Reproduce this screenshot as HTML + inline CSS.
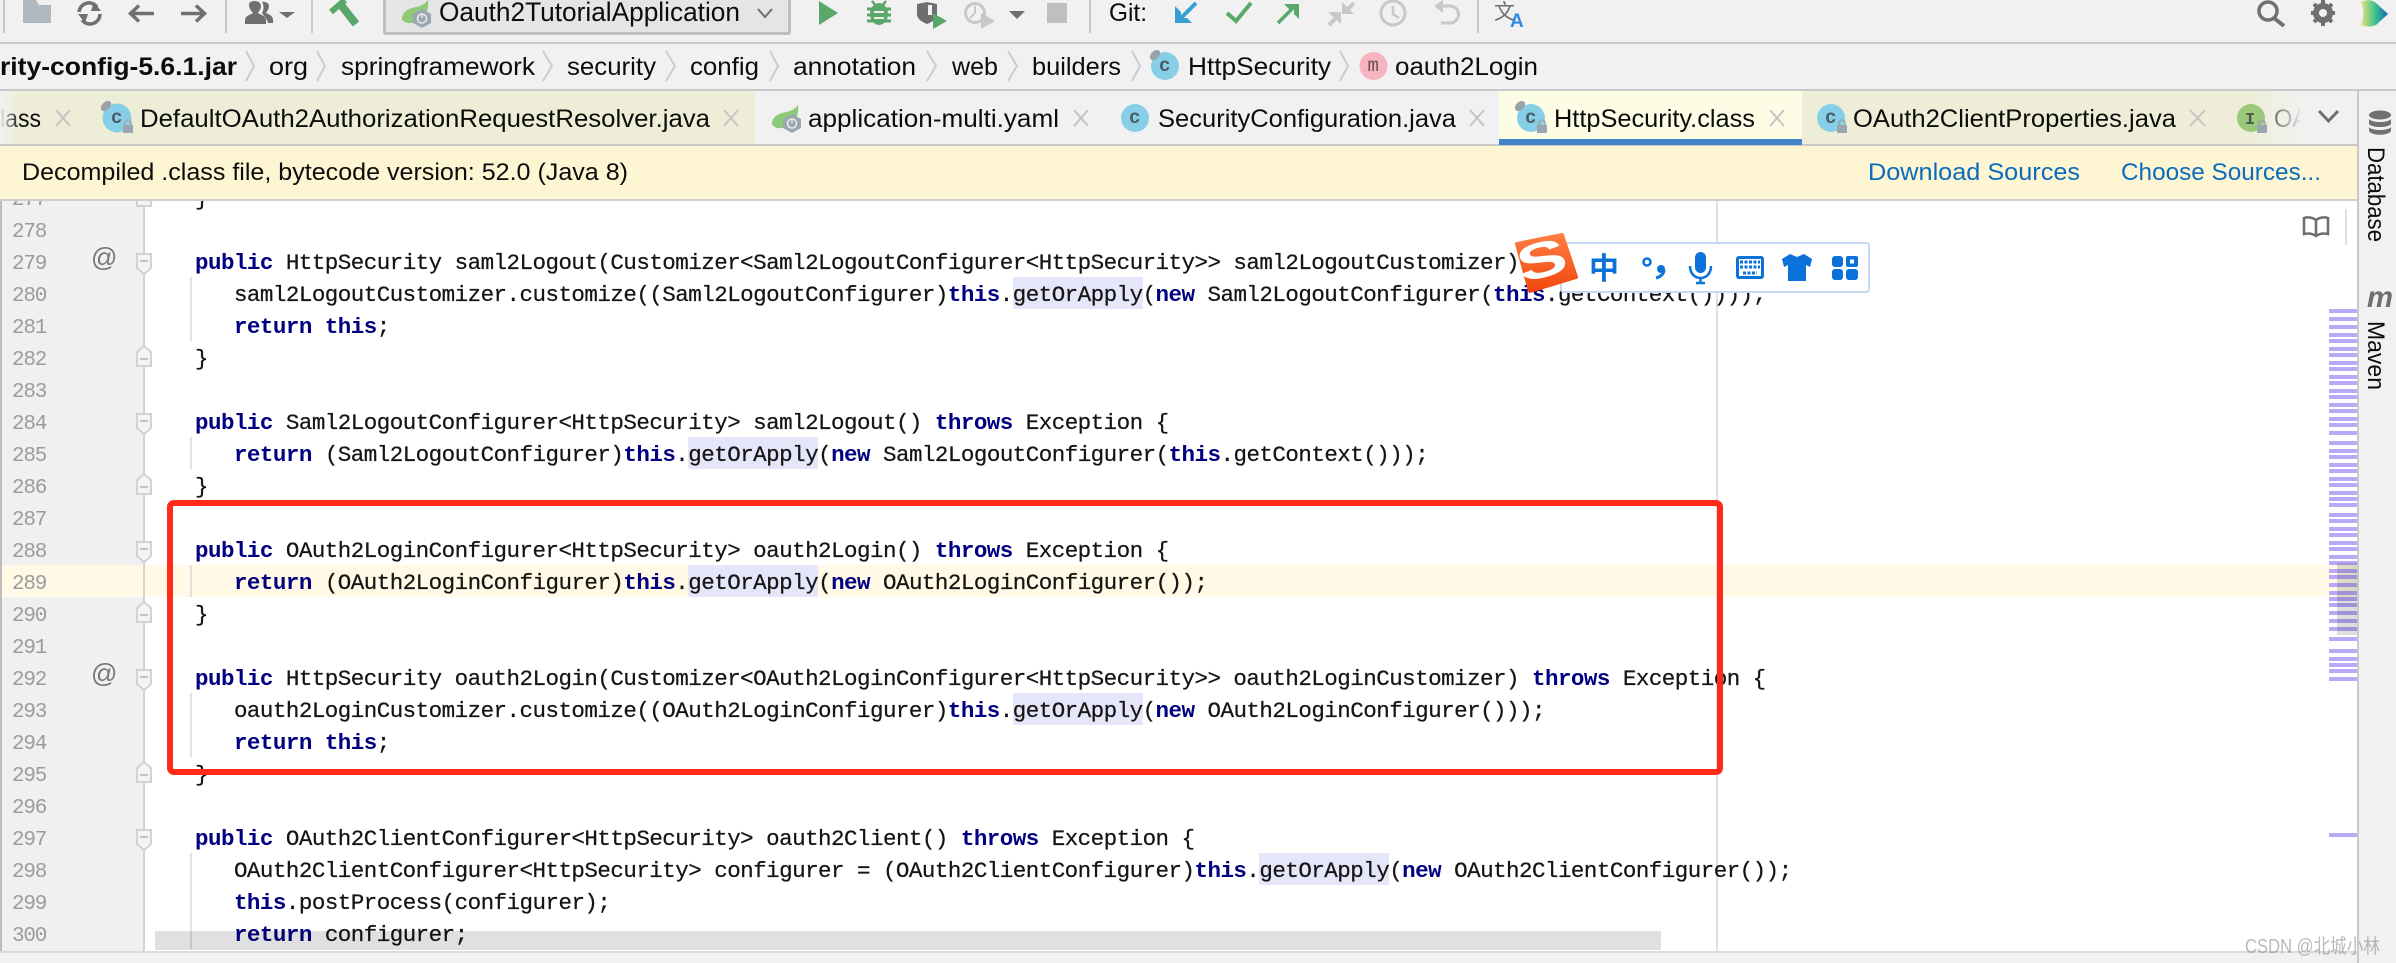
<!DOCTYPE html>
<html><head><meta charset="utf-8"><style>
html,body{margin:0;padding:0;background:#fff;width:2396px;height:963px;overflow:hidden}
svg{display:block}
text{font-family:"Liberation Sans","Noto Sans CJK SC",sans-serif;white-space:pre}
.u{font-size:25px;fill:#0c0c0c}
.l{font-size:24px;fill:#0b6cbd}
.c{font-family:"Liberation Mono",monospace;font-size:22.5px;fill:#151515;letter-spacing:-.522px;stroke:#151515;stroke-width:.25}
.c tspan{font-weight:bold;fill:#000080;stroke:none}
.n{font-family:"Liberation Mono",monospace;font-size:21px;fill:#9c9c9c;letter-spacing:-1.2px}
.ic{font-family:"Liberation Mono",monospace;font-size:19px;fill:#4c5a64;font-weight:bold}
.x{stroke:#c4c4c4;stroke-width:2;fill:none}
.s{stroke:#c9ccd0;stroke-width:2;fill:none}
</style></head><body>
<svg width="2396" height="963" viewBox="0 0 2396 963" xmlns="http://www.w3.org/2000/svg">
<defs>
<linearGradient id="fl" x1="0" x2="1" y1="0" y2="0"><stop offset="0" stop-color="#f1f1f1"/><stop offset="1" stop-color="#f1f1f1" stop-opacity="0"/></linearGradient>
<linearGradient id="fr" x1="0" x2="1" y1="0" y2="0"><stop offset="0" stop-color="#f1f1f1" stop-opacity="0"/><stop offset="1" stop-color="#f1f1f1"/></linearGradient>
<linearGradient id="sg" x1="0" x2="0" y1="0" y2="1"><stop offset="0" stop-color="#ff7d42"/><stop offset="1" stop-color="#f0480e"/></linearGradient>
<linearGradient id="jb" x1="0" x2="1" y1="0" y2="0"><stop offset="0" stop-color="#e9e27a"/><stop offset=".55" stop-color="#35c08c"/><stop offset="1" stop-color="#1565c0"/></linearGradient>
<g id="spring"><path d="M1 19C1 11 9 8 15 7C20 6 24 4 27 0C28 8 26 15 20 19C14 24 4 25 1 19Z" fill="#8fca7b"/><path d="M21 9L30 14V23L21 28L12 23V14Z" fill="#9aa7b0"/><circle cx="21" cy="18.500" r="4.500" fill="none" stroke="#e8e8e8" stroke-width="1.600"/><path d="M21 14V18" stroke="#e8e8e8" stroke-width="1.500"/></g>
<g id="fs"><path d="M-7 0H7V14L0 20L-7 14Z" fill="#f4f4f4" stroke="#d2d2d2" stroke-width="2"/><path d="M-4 7H4" stroke="#c4c4c4" stroke-width="2"/></g>
<g id="fe"><path d="M-7 20H7V6L0 0L-7 6Z" fill="#f4f4f4" stroke="#d2d2d2" stroke-width="2"/><path d="M-4 13H4" stroke="#c4c4c4" stroke-width="2"/></g>
<g id="lock"><path d="M2 5V3A3 3 0 0 1 8 3V5" fill="none" stroke="#9aa7b0" stroke-width="1.600"/><rect x="0" y="5" width="10" height="8" fill="#9aa7b0"/></g>
</defs>

<!-- page base -->
<rect width="2396" height="963" fill="#fff"/>

<!-- editor: current line, gutter -->
<rect x="0" y="199" width="145" height="752" fill="#f0f0f0"/>
<rect x="0" y="199" width="2" height="764" fill="#bdbdbd"/>
<rect x="2" y="565" width="2355" height="32" fill="#fff9e5"/>
<rect x="1716" y="199" width="2" height="752" fill="#e0e0e0"/>
<rect x="143" y="199" width="2" height="752" fill="#d2d2d2"/>

<!-- usage highlights -->
<g fill="#e6e6fa">
<rect x="1013" y="277" width="130" height="32"/>
<rect x="688" y="437" width="130" height="32"/>
<rect x="688" y="565" width="130" height="32"/>
<rect x="1013" y="693" width="130" height="32"/>
<rect x="1259" y="853" width="130" height="32"/>
</g>
<!-- indent guides -->
<g fill="#e2e2e2">
<rect x="190" y="277" width="2" height="64"/>
<rect x="190" y="437" width="2" height="32"/>
<rect x="190" y="565" width="2" height="32"/>
<rect x="190" y="693" width="2" height="64"/>
<rect x="190" y="853" width="2" height="96"/>
</g>

<!-- line numbers -->
<text class="n" x="12" y="205">277</text>
<text class="n" x="12" y="237">278</text>
<text class="n" x="12" y="269">279</text>
<text class="n" x="12" y="301">280</text>
<text class="n" x="12" y="333">281</text>
<text class="n" x="12" y="365">282</text>
<text class="n" x="12" y="397">283</text>
<text class="n" x="12" y="429">284</text>
<text class="n" x="12" y="461">285</text>
<text class="n" x="12" y="493">286</text>
<text class="n" x="12" y="525">287</text>
<text class="n" x="12" y="557">288</text>
<text class="n" x="12" y="589">289</text>
<text class="n" x="12" y="621">290</text>
<text class="n" x="12" y="653">291</text>
<text class="n" x="12" y="685">292</text>
<text class="n" x="12" y="717">293</text>
<text class="n" x="12" y="749">294</text>
<text class="n" x="12" y="781">295</text>
<text class="n" x="12" y="813">296</text>
<text class="n" x="12" y="845">297</text>
<text class="n" x="12" y="877">298</text>
<text class="n" x="12" y="909">299</text>
<text class="n" x="12" y="941">300</text>
<text x="91" y="266" style="font-size:26px;fill:#777">@</text>
<text x="91" y="682" style="font-size:26px;fill:#777">@</text>

<!-- fold marks -->
<use href="#fe" x="144" y="186"/>
<use href="#fs" x="144" y="254"/>
<use href="#fe" x="144" y="346"/>
<use href="#fs" x="144" y="414"/>
<use href="#fe" x="144" y="474"/>
<use href="#fs" x="144" y="542"/>
<use href="#fe" x="144" y="602"/>
<use href="#fs" x="144" y="670"/>
<use href="#fe" x="144" y="762"/>
<use href="#fs" x="144" y="830"/>

<!-- code -->
<text class="c" x="195" y="205">}</text>
<text class="c" x="195" y="269"><tspan>public</tspan> HttpSecurity saml2Logout(Customizer&lt;Saml2LogoutConfigurer&lt;HttpSecurity&gt;&gt; saml2LogoutCustomizer) <tspan>throws</tspan> Exception {</text>
<text class="c" x="195" y="301">   saml2LogoutCustomizer.customize((Saml2LogoutConfigurer)<tspan>this</tspan>.getOrApply(<tspan>new</tspan> Saml2LogoutConfigurer(<tspan>this</tspan>.getContext())));</text>
<text class="c" x="195" y="333">   <tspan>return</tspan> <tspan>this</tspan>;</text>
<text class="c" x="195" y="365">}</text>
<text class="c" x="195" y="429"><tspan>public</tspan> Saml2LogoutConfigurer&lt;HttpSecurity&gt; saml2Logout() <tspan>throws</tspan> Exception {</text>
<text class="c" x="195" y="461">   <tspan>return</tspan> (Saml2LogoutConfigurer)<tspan>this</tspan>.getOrApply(<tspan>new</tspan> Saml2LogoutConfigurer(<tspan>this</tspan>.getContext()));</text>
<text class="c" x="195" y="493">}</text>
<text class="c" x="195" y="557"><tspan>public</tspan> OAuth2LoginConfigurer&lt;HttpSecurity&gt; oauth2Login() <tspan>throws</tspan> Exception {</text>
<text class="c" x="195" y="589">   <tspan>return</tspan> (OAuth2LoginConfigurer)<tspan>this</tspan>.getOrApply(<tspan>new</tspan> OAuth2LoginConfigurer());</text>
<text class="c" x="195" y="621">}</text>
<text class="c" x="195" y="685"><tspan>public</tspan> HttpSecurity oauth2Login(Customizer&lt;OAuth2LoginConfigurer&lt;HttpSecurity&gt;&gt; oauth2LoginCustomizer) <tspan>throws</tspan> Exception {</text>
<text class="c" x="195" y="717">   oauth2LoginCustomizer.customize((OAuth2LoginConfigurer)<tspan>this</tspan>.getOrApply(<tspan>new</tspan> OAuth2LoginConfigurer()));</text>
<text class="c" x="195" y="749">   <tspan>return</tspan> <tspan>this</tspan>;</text>
<text class="c" x="195" y="781">}</text>
<text class="c" x="195" y="845"><tspan>public</tspan> OAuth2ClientConfigurer&lt;HttpSecurity&gt; oauth2Client() <tspan>throws</tspan> Exception {</text>
<text class="c" x="195" y="877">   OAuth2ClientConfigurer&lt;HttpSecurity&gt; configurer = (OAuth2ClientConfigurer)<tspan>this</tspan>.getOrApply(<tspan>new</tspan> OAuth2ClientConfigurer());</text>
<text class="c" x="195" y="909">   <tspan>this</tspan>.postProcess(configurer);</text>
<text class="c" x="195" y="941">   <tspan>return</tspan> configurer;</text>

<!-- h scrollbar & bottom bar -->
<rect x="155" y="931" width="1506" height="19" fill="#000" fill-opacity=".12"/>
<rect x="0" y="951" width="2396" height="12" fill="#f1f1f1"/>
<rect x="0" y="951" width="2357" height="2" fill="#dcdcdc"/>

<!-- error stripes -->
<g fill="#b9a9f8">
<rect x="2329" y="309" width="28" height="4"/><rect x="2329" y="317" width="28" height="4"/><rect x="2329" y="325" width="28" height="4"/><rect x="2329" y="333" width="28" height="4"/><rect x="2329" y="339" width="28" height="4"/><rect x="2329" y="347" width="28" height="4"/><rect x="2329" y="353" width="28" height="4"/><rect x="2329" y="361" width="28" height="4"/><rect x="2329" y="367" width="28" height="4"/><rect x="2329" y="375" width="28" height="4"/><rect x="2329" y="381" width="28" height="4"/><rect x="2329" y="389" width="28" height="4"/><rect x="2329" y="395" width="28" height="4"/><rect x="2329" y="403" width="28" height="4"/><rect x="2329" y="409" width="28" height="4"/><rect x="2329" y="417" width="28" height="4"/><rect x="2329" y="423" width="28" height="4"/><rect x="2329" y="431" width="28" height="4"/><rect x="2329" y="441" width="28" height="4"/><rect x="2329" y="449" width="28" height="4"/><rect x="2329" y="455" width="28" height="4"/><rect x="2329" y="463" width="28" height="4"/><rect x="2329" y="469" width="28" height="4"/><rect x="2329" y="477" width="28" height="4"/><rect x="2329" y="483" width="28" height="4"/><rect x="2329" y="491" width="28" height="4"/><rect x="2329" y="497" width="28" height="4"/><rect x="2329" y="503" width="28" height="4"/><rect x="2329" y="513" width="28" height="4"/><rect x="2329" y="519" width="28" height="4"/><rect x="2329" y="527" width="28" height="4"/><rect x="2329" y="533" width="28" height="4"/><rect x="2329" y="541" width="28" height="4"/><rect x="2329" y="547" width="28" height="4"/><rect x="2329" y="555" width="28" height="4"/><rect x="2329" y="561" width="28" height="4"/><rect x="2329" y="569" width="28" height="4"/><rect x="2329" y="575" width="28" height="4"/><rect x="2329" y="583" width="28" height="4"/><rect x="2329" y="591" width="28" height="4"/><rect x="2329" y="597" width="28" height="4"/><rect x="2329" y="603" width="28" height="4"/><rect x="2329" y="611" width="28" height="4"/><rect x="2329" y="619" width="28" height="4"/><rect x="2329" y="627" width="28" height="4"/><rect x="2329" y="637" width="28" height="4"/><rect x="2329" y="649" width="28" height="4"/><rect x="2329" y="657" width="28" height="4"/><rect x="2329" y="663" width="28" height="4"/><rect x="2329" y="669" width="28" height="4"/><rect x="2329" y="677" width="28" height="4"/><rect x="2329" y="833" width="28" height="4"/>
</g>
<rect x="2337" y="563" width="20" height="72" fill="#000" fill-opacity=".13"/>

<!-- reader icon -->
<path d="M2316 220C2312 217 2307 217 2304 218V234C2308 233 2312 233 2316 236C2320 233 2324 233 2328 234V218C2325 217 2320 217 2316 220ZM2316 220V236" fill="none" stroke="#6e6e6e" stroke-width="2.500"/>
<rect x="2345" y="209" width="2" height="36" fill="#e0e0e0"/>

<!-- red box -->
<rect x="170" y="503" width="1550" height="269" rx="4" fill="none" stroke="#ff2a18" stroke-width="6"/>

<!-- toolbar -->
<rect x="0" y="0" width="2396" height="42" fill="#f1f1f1"/>
<rect x="0" y="42" width="2396" height="2" fill="#c9c9c9"/>
<g fill="#c8c8c8"><rect x="3" y="0" width="2" height="33"/><rect x="225" y="0" width="2" height="33"/><rect x="311" y="0" width="2" height="33"/><rect x="1089" y="0" width="2" height="33"/><rect x="1477" y="0" width="2" height="33"/></g>
<path d="M23 0H36L39 5H51V23H23Z" fill="#afb9bf"/>
<g fill="none" stroke="#707070" stroke-width="3.500">
<path d="M79 12A10 10 0 0 1 97 7"/><path d="M100 14A10 10 0 0 1 82 20"/>
<path d="M154 13.500H131M139 5.500L130.500 13.500L139 21.500"/>
<path d="M181 13.500H204M196 5.500L204.500 13.500L196 21.500"/>
</g>
<path d="M94 2L101 11H91ZM85 23L78 14H88Z" fill="#707070"/>
<path d="M245 24V20C245 16 250 15 253 13C250 10 249 7 249 5C249 2 252 1 255 1C258 1 261 3 261 6C261 9 259 11 258 13C261 15 266 16 266 20V24ZM262 2C265 1 269 3 269 6C269 9 267 11 266 13C269 14 273 16 273 20V23H268C267 18 263 15 262 13C264 10 264 5 262 2Z" fill="#707070"/>
<path d="M279 12H295L287 18Z" fill="#707070"/>
<path d="M341 5L356 24" stroke="#59a869" stroke-width="8"/><path d="M331 12L345 0" stroke="#59a869" stroke-width="6"/>
<rect x="384.500" y="-3" width="405" height="36.500" rx="1" fill="#e5e5e5" stroke="#bfbfbf" stroke-width="3"/>
<use href="#spring" x="401" y="0"/>
<text class="u" x="439" y="21" textLength="301" lengthAdjust="spacingAndGlyphs" style="font-size:27px">Oauth2TutorialApplication</text>
<path d="M758 9L765 17L772 9" fill="none" stroke="#6e6e6e" stroke-width="2"/>
<path d="M819 1L838 13L819 25Z" fill="#59a869"/>
<!-- bug -->
<ellipse cx="879" cy="14" rx="9" ry="11" fill="#59a869"/>
<path d="M872 1L876 6M886 1L882 6" stroke="#59a869" stroke-width="2.500"/>
<path d="M867 9H891M867 15H891M867 21H891" stroke="#59a869" stroke-width="3"/>
<path d="M874 12H884M874 18H884" stroke="#f1f1f1" stroke-width="2"/>
<!-- coverage -->
<path d="M917 4L927 2L937 4V14C937 19 932 22 927 24C922 22 917 19 917 14Z" fill="#6e6e6e"/>
<rect x="928" y="5" width="4" height="10" fill="#f1f1f1"/>
<path d="M933 13L947 21L933 29Z" fill="#59a869"/>
<circle cx="975" cy="13" r="9.500" fill="none" stroke="#c8c8c8" stroke-width="3"/><path d="M975 6V13L970 18" fill="none" stroke="#c8c8c8" stroke-width="2"/>
<path d="M981 13L995 21L981 29Z" fill="#c8c8c8"/>
<path d="M1009 11H1025L1017 19Z" fill="#6e6e6e"/>
<rect x="1047" y="3" width="20" height="20" fill="#bfbfbf"/>
<text class="u" x="1109" y="21" textLength="38" lengthAdjust="spacingAndGlyphs">Git:</text>
<path d="M1196 3L1181 18" stroke="#389fd6" stroke-width="4"/><path d="M1175 6V23H1192L1187 18H1181V12Z" fill="#389fd6"/>
<path d="M1227 13L1236 21L1251 3" fill="none" stroke="#59a869" stroke-width="4"/>
<path d="M1278 23L1295 6" stroke="#59a869" stroke-width="3.500"/><path d="M1284 4H1299V19L1294 14V9H1289Z" fill="#59a869"/>
<!-- merge -->
<path d="M1354 3L1346 11M1329 25L1337 17" stroke="#c8c8c8" stroke-width="4"/>
<path d="M1342 2V14H1354ZM1341 24V12H1328Z" fill="#c8c8c8"/>
<circle cx="1393" cy="13" r="12" fill="none" stroke="#c8c8c8" stroke-width="3"/><path d="M1393 6V14L1399 18" fill="none" stroke="#c8c8c8" stroke-width="2.500"/>
<path d="M1439 6H1450A8 8 0 0 1 1450 23H1441" fill="none" stroke="#c8c8c8" stroke-width="3"/><path d="M1443 0L1434 6L1443 13Z" fill="#c8c8c8"/>
<text x="1494" y="19" style="font-size:21px;fill:#6e6e6e;font-family:'Noto Sans CJK SC',sans-serif">文</text>
<text x="1510" y="27" style="font-size:19px;font-weight:bold;fill:#2a8ce0">A</text>
<circle cx="2268" cy="11" r="9" fill="none" stroke="#707070" stroke-width="3.500"/><path d="M2274 18L2284 26" stroke="#707070" stroke-width="4"/>
<circle cx="2323" cy="13" r="7.500" fill="none" stroke="#707070" stroke-width="5"/>
<path d="M2323 0V26M2311 13H2335M2314 4L2332 22M2332 4L2314 22" stroke="#707070" stroke-width="4"/>
<circle cx="2323" cy="13" r="4" fill="#f1f1f1"/>
<path d="M2361 2C2367 -1 2373 0 2376 3L2388 14L2376 25C2371 27 2365 27 2361 25C2364 18 2364 8 2361 2Z" fill="url(#jb)"/>

<!-- breadcrumb -->
<rect x="0" y="44" width="2396" height="45" fill="#f1f1f1"/>
<rect x="0" y="89" width="2396" height="2" fill="#c9c9c9"/>
<text class="u" x="0" y="75" textLength="237" lengthAdjust="spacingAndGlyphs" style="font-weight:bold">rity-config-5.6.1.jar</text>
<text class="u" x="269" y="75" textLength="39" lengthAdjust="spacingAndGlyphs">org</text>
<text class="u" x="341" y="75" textLength="194" lengthAdjust="spacingAndGlyphs">springframework</text>
<text class="u" x="567" y="75" textLength="89" lengthAdjust="spacingAndGlyphs">security</text>
<text class="u" x="690" y="75" textLength="69" lengthAdjust="spacingAndGlyphs">config</text>
<text class="u" x="793" y="75" textLength="123" lengthAdjust="spacingAndGlyphs">annotation</text>
<text class="u" x="952" y="75" textLength="46" lengthAdjust="spacingAndGlyphs">web</text>
<text class="u" x="1032" y="75" textLength="89" lengthAdjust="spacingAndGlyphs">builders</text>
<text class="u" x="1188" y="75" textLength="143" lengthAdjust="spacingAndGlyphs">HttpSecurity</text>
<text class="u" x="1395" y="75" textLength="143" lengthAdjust="spacingAndGlyphs">oauth2Login</text>
<path class="s" d="M246 51L254 66L246 81M317 51L325 66L317 81M543 51L552 66L543 81M666 51L675 66L666 81M770 51L778 66L770 81M927 51L936 66L927 81M1008 51L1017 66L1008 81M1132 51L1140 66L1132 81M1340 51L1348 66L1340 81"/>
<circle cx="1165" cy="66" r="14" fill="#87cfe7"/><ellipse cx="1155" cy="55" rx="6" ry="4" transform="rotate(-45 1155 55)" fill="#9aa3a9"/>
<text class="ic" x="1159" y="71">c</text>
<circle cx="1373.500" cy="66" r="14" fill="#f7b3c0"/>
<text class="ic" x="1367.500" y="71" style="fill:#6b4f56;font-weight:normal">m</text>

<!-- tabs -->
<rect x="0" y="91" width="2357" height="53" fill="#f1f1f1"/>
<rect x="0" y="91" width="755" height="53" fill="#eeeed8"/>
<rect x="1499" y="91" width="303" height="48" fill="#fdfde6"/>
<rect x="1499" y="139" width="303" height="6" fill="#4083c9"/>
<rect x="1802" y="91" width="502" height="53" fill="#eeeed8"/>
<text class="u" x="0" y="127" textLength="41" lengthAdjust="spacingAndGlyphs">lass</text>
<rect x="0" y="91" width="20" height="53" fill="url(#fl)"/>
<text class="u" x="140" y="127" textLength="570" lengthAdjust="spacingAndGlyphs">DefaultOAuth2AuthorizationRequestResolver.java</text>
<text class="u" x="808" y="127" textLength="251" lengthAdjust="spacingAndGlyphs">application-multi.yaml</text>
<text class="u" x="1158" y="127" textLength="298" lengthAdjust="spacingAndGlyphs">SecurityConfiguration.java</text>
<text class="u" x="1554" y="127" textLength="201" lengthAdjust="spacingAndGlyphs">HttpSecurity.class</text>
<text class="u" x="1853" y="127" textLength="323" lengthAdjust="spacingAndGlyphs">OAuth2ClientProperties.java</text>
<text class="u" x="2274" y="127" textLength="34" lengthAdjust="spacingAndGlyphs">OA</text>
<rect x="2250" y="91" width="54" height="53" fill="url(#fr)"/>
<rect x="2300" y="91" width="57" height="53" fill="#f1f1f1"/>
<path class="x" d="M56 110L70 126M70 110L56 126M724 110L738 126M738 110L724 126M1074 110L1088 126M1088 110L1074 126M1470 110L1484 126M1484 110L1470 126M1770 110L1784 126M1784 110L1770 126M2190 110L2205 126M2205 110L2190 126"/>
<path d="M2319 111L2328.500 121L2338 111" fill="none" stroke="#6e6e6e" stroke-width="3"/>

<circle cx="117" cy="118" r="14.500" fill="#87cfe7"/><ellipse cx="106" cy="106" rx="6" ry="4" transform="rotate(-45 106 106)" fill="#9aa3a9"/>
<text class="ic" x="111" y="123">c</text><use href="#lock" x="123" y="120"/>
<use href="#spring" x="771" y="105"/>
<circle cx="1135" cy="118" r="14" fill="#87cfe7"/><text class="ic" x="1129" y="123">c</text>
<circle cx="1531" cy="118" r="14" fill="#87cfe7"/><ellipse cx="1520" cy="106" rx="6" ry="4" transform="rotate(-45 1520 106)" fill="#9aa3a9"/>
<text class="ic" x="1525" y="123">c</text><use href="#lock" x="1537" y="120"/>
<circle cx="1831" cy="118" r="14" fill="#87cfe7"/><text class="ic" x="1825" y="123">c</text><use href="#lock" x="1837" y="120"/>
<circle cx="2251" cy="118" r="14" fill="#9bc97b"/><text class="ic" x="2245" y="124" style="font-size:17px;fill:#4f5b45">I</text><use href="#lock" x="2257" y="120"/>
<rect x="0" y="144" width="2357" height="2" fill="#c9c9c9"/>
<rect x="1499" y="139" width="303" height="6" fill="#4083c9"/>

<!-- banner -->
<rect x="0" y="146" width="2357" height="53" fill="#fef6d3"/>
<rect x="0" y="199" width="2357" height="2" fill="#cfcfcf"/>
<text class="u" x="22" y="180" textLength="606" lengthAdjust="spacingAndGlyphs" style="font-size:24px">Decompiled .class file, bytecode version: 52.0 (Java 8)</text>
<text class="l" x="1868" y="180" textLength="212" lengthAdjust="spacingAndGlyphs">Download Sources</text>
<text class="l" x="2121" y="180" textLength="200" lengthAdjust="spacingAndGlyphs">Choose Sources...</text>

<!-- right tool strip -->
<rect x="2359" y="91" width="37" height="872" fill="#f1f1f1"/>
<rect x="2357" y="91" width="2" height="872" fill="#c9c9c9"/>
<g fill="#707070"><ellipse cx="2380" cy="115" rx="11" ry="4.500"/><path d="M2369 119C2372 123 2388 123 2391 119V124C2388 128 2372 128 2369 124ZM2369 127C2372 131 2388 131 2391 127V131C2388 136 2372 136 2369 131Z"/></g>
<text transform="translate(2368 147) rotate(90)" textLength="95" lengthAdjust="spacingAndGlyphs" style="font-size:24px;fill:#0c0c0c">Database</text>
<text x="2367" y="307" textLength="26" lengthAdjust="spacingAndGlyphs" style="font-size:30px;font-weight:bold;font-style:italic;fill:#6e6e6e">m</text>
<text transform="translate(2368 321) rotate(90)" textLength="69" lengthAdjust="spacingAndGlyphs" style="font-size:24px;fill:#0c0c0c">Maven</text>

<!-- sogou IME bar -->
<rect x="1561" y="243" width="308" height="49" rx="3" fill="#fff" stroke="#c6d8f2" stroke-width="2"/>
<path d="M1517 244L1562 235L1576 277L1530 291Z" fill="url(#sg)" stroke="url(#sg)" stroke-width="4" stroke-linejoin="round"/>
<text transform="translate(1522 283) rotate(-15) scale(1.500 1)" x="0" y="0" style="font-size:50px;font-weight:bold;fill:#fff">S</text>
<text x="1589" y="279" style="font-size:30px;font-weight:bold;fill:#0b72d9;font-family:'Noto Sans CJK SC',sans-serif">中</text>
<circle cx="1647" cy="262" r="3.500" fill="none" stroke="#0b72d9" stroke-width="2.500"/>
<circle cx="1661" cy="269" r="4" fill="#0b72d9"/><path d="M1664 270C1664 274 1660 277 1656 278" fill="none" stroke="#0b72d9" stroke-width="3"/>
<rect x="1695" y="252" width="11" height="21" rx="5.500" fill="#0b72d9"/>
<path d="M1690 266C1690 282 1711 282 1711 266M1700.500 278V283M1696 283H1705" fill="none" stroke="#0b72d9" stroke-width="2.500"/>
<rect x="1736" y="256" width="28" height="23" rx="3" fill="#0b72d9"/>
<rect x="1739" y="259" width="22" height="17" fill="#fff"/>
<path d="M1740 262H1760M1740 267H1760M1743 273H1757" stroke="#0b72d9" stroke-width="3" stroke-dasharray="3 1.500"/>
<path d="M1790 254L1797 257L1804 254L1812 259L1810 267L1806 265V281H1788V265L1784 267L1782 259Z" fill="#0b72d9"/>
<rect x="1832" y="256" width="11" height="11" rx="3" fill="#0b72d9"/><rect x="1832" y="269" width="11" height="11" rx="3" fill="#0b72d9"/><rect x="1846" y="269" width="12" height="11" rx="3" fill="#0b72d9"/><rect x="1846" y="256" width="12" height="11" rx="2" fill="#0b72d9"/><rect x="1850" y="259.500" width="4" height="4" fill="#fff"/>

<!-- watermark -->
<text x="2245" y="953" textLength="135" lengthAdjust="spacingAndGlyphs" style="font-size:20px;fill:#8a8a8a;fill-opacity:.6">CSDN @北城小林</text>
</svg>
</body></html>
